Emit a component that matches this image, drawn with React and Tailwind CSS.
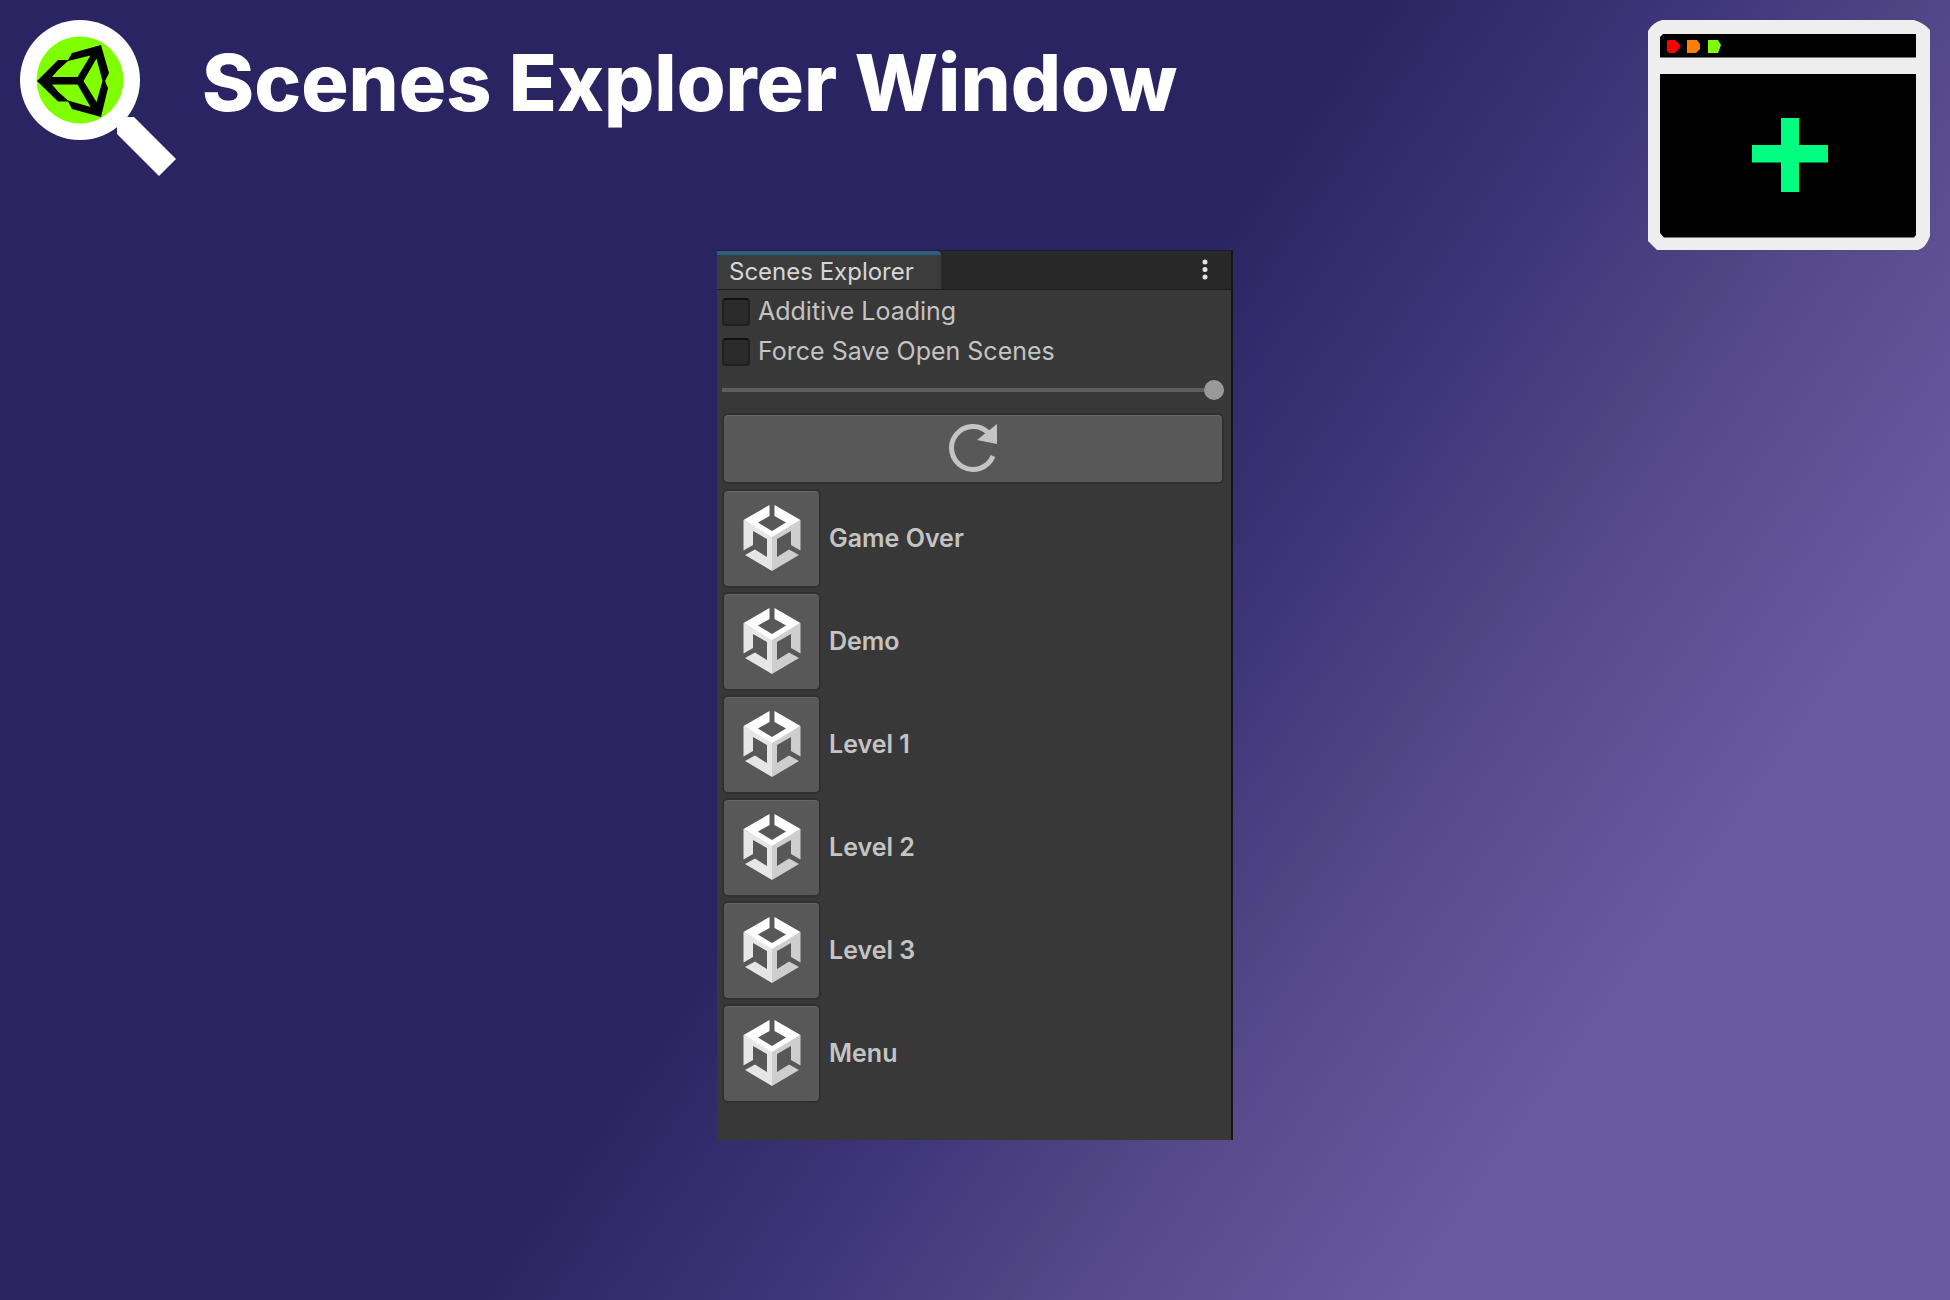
const SCENES = ['Game Over', 'Demo', 'Level 1', 'Level 2', 'Level 3', 'Menu'];

function ExplorerLogo() {
  return (
    <svg viewBox="0 0 156 156" className="size-39 shrink-0" aria-hidden="true">
      <circle cx="60" cy="60" r="60" fill="#fff" />
      <path d="M107 97 L114 97 L156 139 L139 156 L97 114 L97 107Z" fill="#fff" />
      <circle cx="60" cy="60" r="43.500" fill="#80ff00" />
      <path
        fillRule="evenodd"
        fill="#000"
        d="M17 61 L38 40 H46 L48 40 L52 33 L81 25 L89 53 L85 61 L88 68 L81 97 L52 89 L48 81.500 L38 81.500Z
           M32 57 H57.500 L70.500 35.500 L48 41 L38 50Z
           M32 64.500 H57.500 L70.500 87 L48 80.500 L38 71.500Z
           M63.500 61 L76.500 82 L82.500 61 L76.500 38.500Z"
      />
    </svg>
  );
}

function WindowLogo() {
  return (
    <svg viewBox="0 0 282 230" className="h-[230px] w-[282px] shrink-0" aria-hidden="true">
      <path d="M14 0 H266 Q276 3 282 10 V216 Q278 228 270 230 H9 L0 221 V11 Q4 3 14 0Z" fill="#eee" />
      <path d="M15 14 H268 V37.500 H12 V17Z M12 54 H268 V215 L266 217.500 H16 L12 213Z" fill="#000" />
      <path d="M20 20 H27 L33 26 L27 33 H21 L19 31 V21Z" fill="#f00" />
      <path d="M39 20 H49 L52 24 V29 L48 33 H39Z" fill="#ff8000" />
      <path d="M60 20 H70 L73 25 L70 33 H60Z" fill="#80ff00" />
      <path d="M133 98 H151 V125 H180 V142.500 H151 V172 H133 V142.500 H104 V125 H133Z" fill="#00ff80" />
    </svg>
  );
}

function SceneIcon() {
  return (
    <svg viewBox="0 0 58 68" className="h-17 w-[58px]" aria-hidden="true">
      <path d="M.5 16 L29 32 V67 L2 51 L12 45.500 L24 53 V35 L10 27 V41 L.5 46.500Z" fill="#e6e6e6" />
      <path d="M57.500 16 L29 32 V67 L56 51 L46 45.500 L34 53 V35 L48 27 V41 L57.500 46.500Z" fill="#cecece" />
      <path d="M26.500 1 V12 L15 18.500 L29 27 L43 18.500 L31.500 12 V1 L57.500 16 L29 33 L.5 16Z" fill="#fff" />
    </svg>
  );
}

function ReloadIcon() {
  return (
    <svg viewBox="0 0 50 50" className="size-[50px]" aria-hidden="true">
      <path d="M40.500 10 A21.500 21.500 0 1 0 45 33" fill="none" stroke="#c4c4c4" strokeWidth="5" />
      <path d="M49 1 V21 L29 17Z" fill="#c4c4c4" />
    </svg>
  );
}

const BUTTON =
  'flex items-center justify-center rounded-md border-2 border-[#303030] bg-[#585858] pb-0.5 shadow-[inset_0_1px_0_#666]';

function Toggle({ label }) {
  return (
    <label className="flex h-10 items-center gap-2">
      <input
        type="checkbox"
        className="size-7 appearance-none rounded-sm border-2 border-[#212121] border-t-[#111] bg-[#2a2a2a] checked:bg-[#3a72b0]"
      />
      {label}
    </label>
  );
}

export default function App() {
  return (
    <div className="flex min-h-screen flex-col bg-[linear-gradient(125deg,#2b2462_48%,#40367a_60%,#4f4585_67%,#564a8d_70%,#675a9e_81%)] font-['Inter',sans-serif]">
      <header className="flex items-start justify-between px-5 pt-5">
        <div className="flex items-start gap-6.5">
          <ExplorerLogo />
          <h1 className="pt-1.5 text-[79px] leading-[112px] font-extrabold text-white">
            Scenes Explorer Window
          </h1>
        </div>
        <WindowLogo />
      </header>

      <main className="mx-auto flex w-[516px] flex-col border-r-2 border-[#161616] bg-[#383838] pb-[37px] text-[25px] text-[#c4c4c4]">
        <div className="flex h-10 items-stretch justify-between border-t border-b border-[#1e1e1e] bg-[#282828]">
          <button className="w-56 rounded-tr-sm border-t-4 border-[#2c5d87] bg-[#3c3c3c] pl-3 text-left text-2xl leading-8 text-[#d6d6d6]">
            Scenes Explorer
          </button>
          <button aria-label="More options" className="flex w-13 items-center justify-center">
            <svg viewBox="0 0 6 22" className="h-[22px] w-1.5" fill="#e4e4e4">
              <circle cx="3" cy="3" r="2.500" />
              <circle cx="3" cy="10.500" r="2.500" />
              <circle cx="3" cy="18" r="2.500" />
            </svg>
          </button>
        </div>
        <div className="flex flex-col pt-0.5 pr-[7px] pl-[5px]">
          <Toggle label="Additive Loading" />
          <Toggle label="Force Save Open Scenes" />
          <input
            type="range"
            aria-label="Icon size"
            defaultValue="100"
            className="h-9 w-full appearance-none bg-transparent [&::-webkit-slider-runnable-track]:h-1 [&::-webkit-slider-runnable-track]:bg-[#5e5e5e] [&::-webkit-slider-thumb]:-mt-2 [&::-webkit-slider-thumb]:size-5 [&::-webkit-slider-thumb]:appearance-none [&::-webkit-slider-thumb]:rounded-full [&::-webkit-slider-thumb]:bg-[#999]"
          />
          <button aria-label="Refresh" className={`${BUTTON} mt-[5px] h-[71px]`}>
            <ReloadIcon />
          </button>
          <ul className="pt-px">
            {SCENES.map((name) => (
              <li key={name} className="flex h-[103px] items-center gap-2 pt-1">
                <button aria-label={`Open ${name}`} className={`${BUTTON} size-[99px]`}>
                  <SceneIcon />
                </button>
                <span className="font-semibold">{name}</span>
              </li>
            ))}
          </ul>
        </div>
      </main>
    </div>
  );
}
